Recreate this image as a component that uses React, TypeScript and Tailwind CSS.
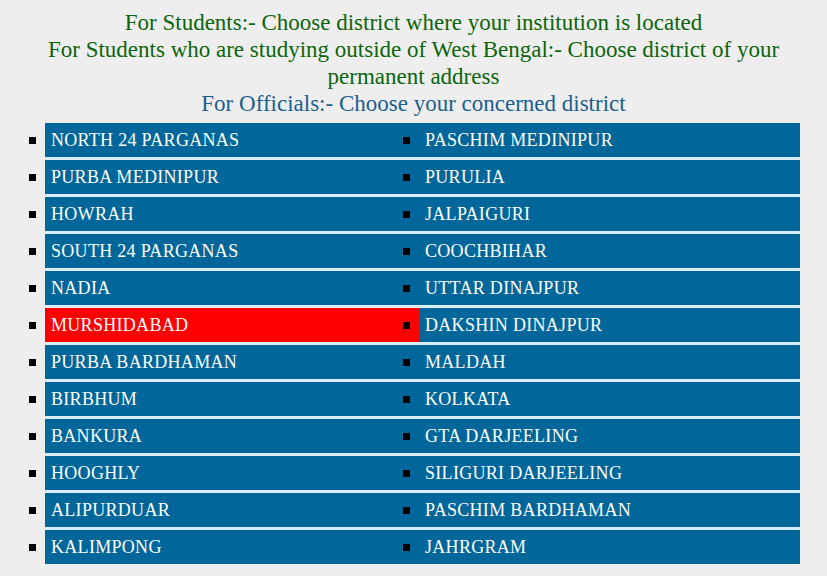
const rows: [string, string][] = [
  ["NORTH 24 PARGANAS", "PASCHIM MEDINIPUR"],
  ["PURBA MEDINIPUR", "PURULIA"],
  ["HOWRAH", "JALPAIGURI"],
  ["SOUTH 24 PARGANAS", "COOCHBIHAR"],
  ["NADIA", "UTTAR DINAJPUR"],
  ["MURSHIDABAD", "DAKSHIN DINAJPUR"],
  ["PURBA BARDHAMAN", "MALDAH"],
  ["BIRBHUM", "KOLKATA"],
  ["BANKURA", "GTA DARJEELING"],
  ["HOOGHLY", "SILIGURI DARJEELING"],
  ["ALIPURDUAR", "PASCHIM BARDHAMAN"],
  ["KALIMPONG", "JAHRGRAM"],
];

function Item({ name, active }: { name: string; active?: boolean }) {
  return (
    <li
      className={`relative h-[34px] flex items-center pl-[6px] pt-[1px] text-[18px] tracking-[0.3px] text-white uppercase ${
        active ? "bg-[#ff0000]" : "bg-[#016699]"
      }`}
    >
      <span className="absolute left-[-16px] top-[14px] w-[7px] h-[7px] bg-black" />
      <a href="#" className="whitespace-nowrap">{name}</a>
    </li>
  );
}

export default function App() {
  return (
    <div className="min-h-screen bg-[#eeeeee] pt-[9px] pb-4 font-['Liberation_Serif',serif]">
      <div className="px-[30px] text-center text-[23px] leading-[27px]">
        <div className="text-[#0b650b]">For Students:- Choose district where your institution is located</div>
        <div className="text-[#0b650b]">
          For Students who are studying outside of West Bengal:- Choose district of your permanent address
        </div>
        <div className="text-[#1b5f8e]">For Officials:- Choose your concerned district</div>
      </div>
      <ul className="mt-[6px] ml-[45px] w-[755px] flex flex-col gap-[3px] bg-[#d8eef8]">
        {rows.map(([a, b]) => (
          <div key={a} className="grid grid-cols-[374px_1fr]">
            <Item name={a} active={a === "MURSHIDABAD"} />
            <Item name={b} />
          </div>
        ))}
      </ul>
    </div>
  );
}
